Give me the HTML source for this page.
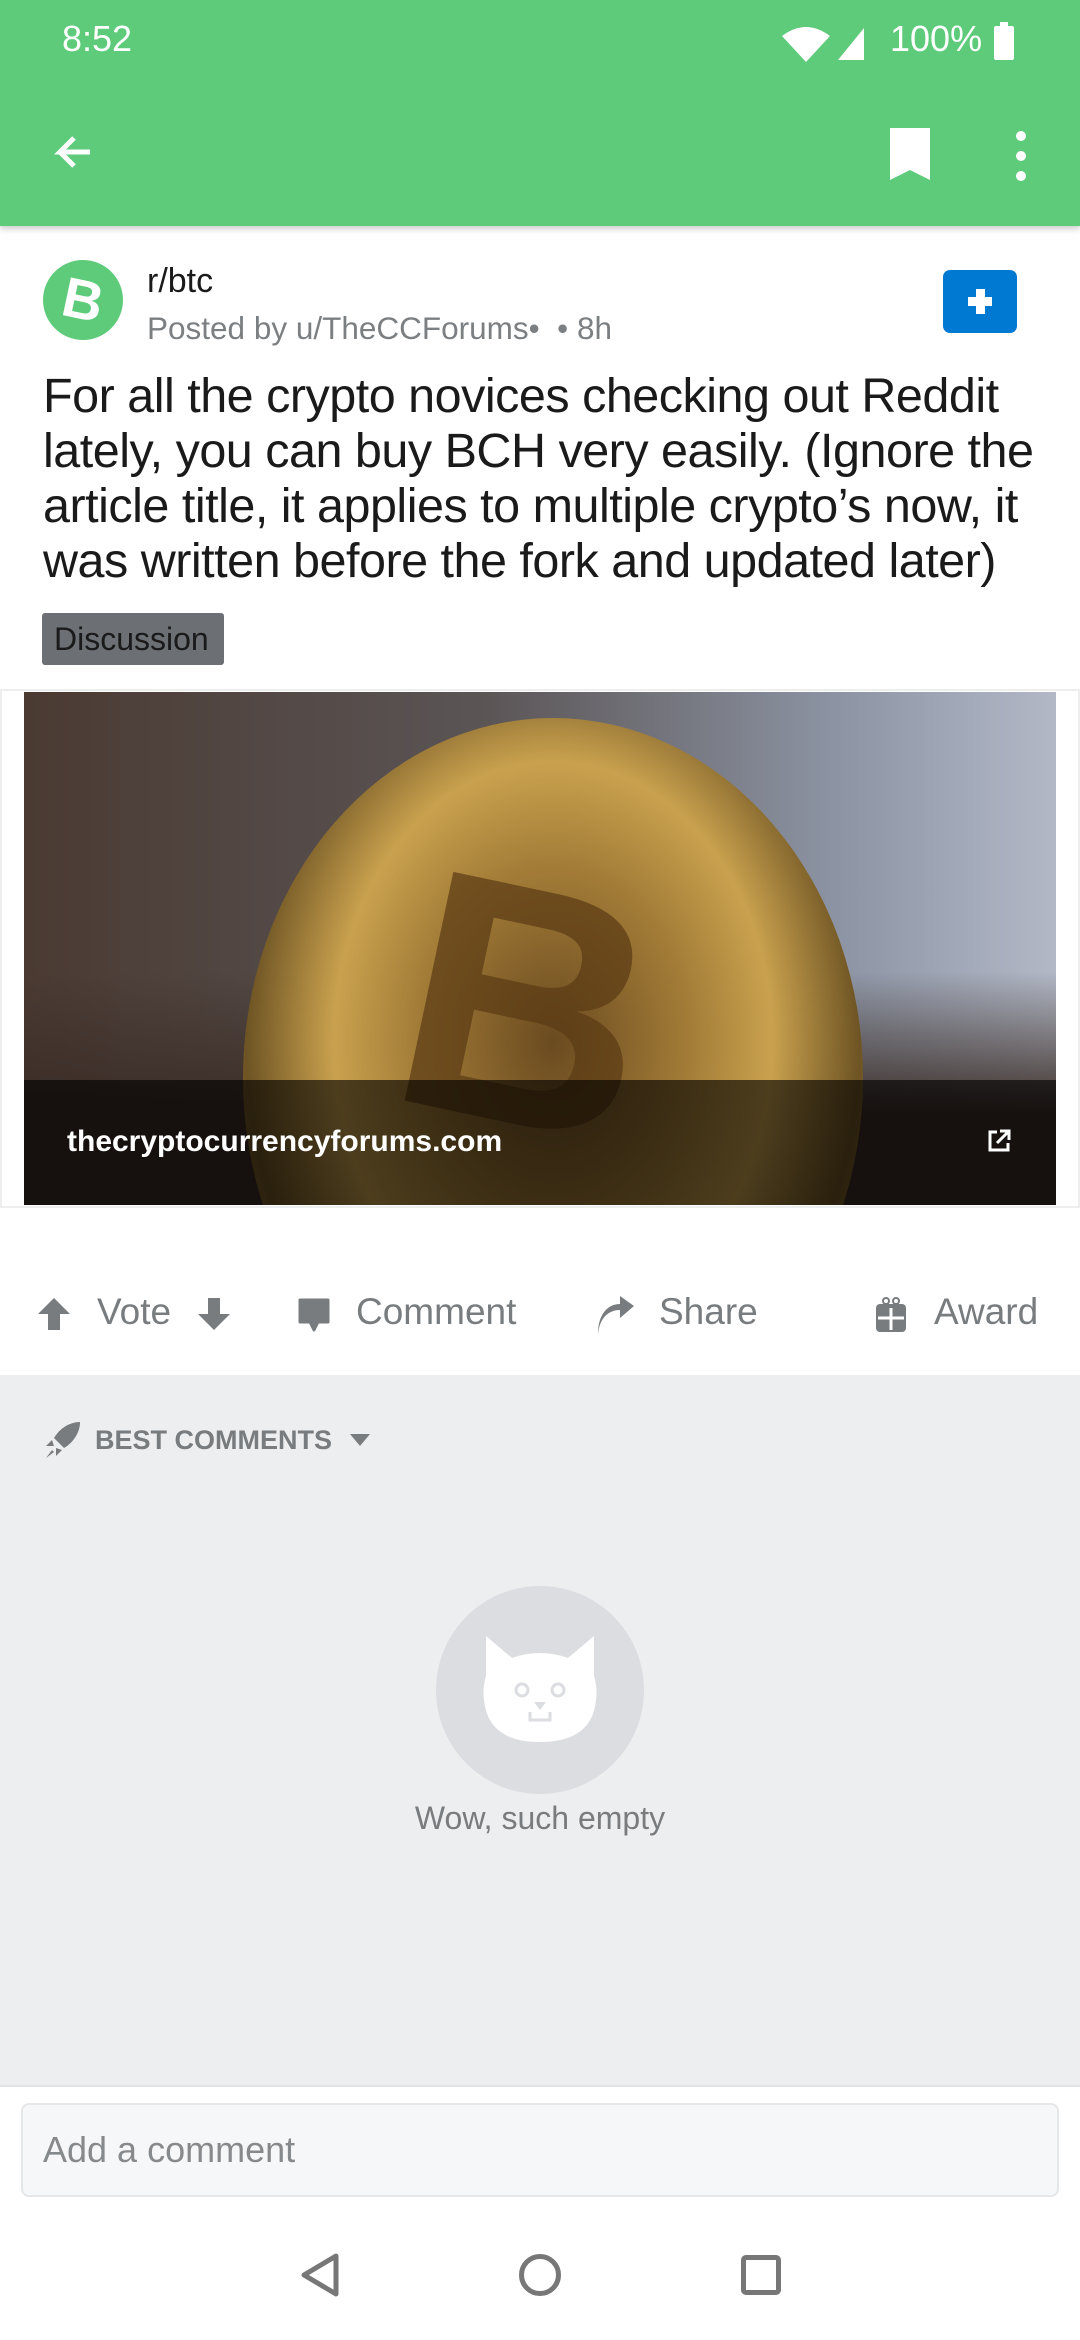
<!DOCTYPE html>
<html><head><meta charset="utf-8"><style>
*{margin:0;padding:0;box-sizing:border-box}
body{width:1080px;height:2340px;position:relative;background:#fff;font-family:"Liberation Sans",sans-serif;overflow:hidden}
.a{position:absolute}
.t div{white-space:nowrap}
</style></head><body>
<div class="a" style="left:0;top:0;width:1080px;height:226px;background:#5ecb7a;box-shadow:0 3px 6px rgba(0,0,0,.2)"></div>
<div class="a" style="left:62px;top:18px;color:#fff;font-size:36px">8:52</div>
<svg class="a" style="left:776px;top:24px" width="60" height="40" viewBox="0 0 60 40"><path d="M6 12 Q30 -6 54 12 L30 38Z" fill="#fff"/></svg>
<svg class="a" style="left:836px;top:26px" width="30" height="36"><path d="M2 34 L28 2 L28 34Z" fill="#fff"/></svg>
<div class="a" style="left:890px;top:18px;color:#fff;font-size:36px">100%</div>
<div class="a" style="left:994px;top:26px;width:20px;height:34px;background:#fff;border-radius:2px"></div>
<div class="a" style="left:1000px;top:22px;width:8px;height:6px;background:#fff"></div>
<svg class="a" style="left:48px;top:130px" width="48" height="48" viewBox="0 0 48 48"><path d="M42 22H12L26 8M12 22L26 36" stroke="#fff" stroke-width="5" fill="none"/></svg>
<svg class="a" style="left:886px;top:126px" width="48" height="56"><path d="M4 2H44V54L24 44L4 54Z" fill="#fff"/></svg>
<div class="a" style="left:1016px;top:131px;width:10px;height:10px;border-radius:5px;background:#fff;box-shadow:0 20px 0 #fff,0 40px 0 #fff"></div>

<div class="a" style="left:43px;top:260px;width:80px;height:80px;border-radius:40px;background:#5ecb7a;color:#fff;font-size:56px;font-weight:bold;text-align:center;line-height:80px;transform:rotate(12deg)">B</div>
<div class="a" style="left:147px;top:262px;font-size:34px;color:#1a1a1b">r/btc</div>
<div class="a" style="left:147px;top:310px;font-size:31.5px;color:#7c7f82">Posted by u/TheCCForums• &nbsp;• 8h</div>
<div class="a" style="left:943px;top:270px;width:74px;height:63px;border-radius:7px;background:#0079d3"></div>
<div class="a" style="left:968px;top:297px;width:24px;height:9px;background:#fff"></div>
<div class="a" style="left:976px;top:289px;width:9px;height:25px;background:#fff"></div>
<div class="a t" style="left:43px;top:369px;font-size:48.5px;line-height:55px;color:#1a1a1b;letter-spacing:-0.5px">
<div>For all the crypto novices checking out Reddit</div>
<div>lately, you can buy BCH very easily. (Ignore the</div>
<div>article title, it applies to multiple crypto’s now, it</div>
<div>was written before the fork and updated later)</div>
</div>
<div class="a" style="left:42px;top:613px;width:182px;height:52px;background:#6c6f73;border-radius:3px;font-size:32px;line-height:52px;color:#1a1a1b;padding-left:12px">Discussion</div>

<div class="a" style="left:0;top:689px;width:1080px;height:519px;border:2px solid #eee"></div>
<div class="a" style="left:24px;top:692px;width:1032px;height:513px;overflow:hidden;background:linear-gradient(90deg,#4a3a32 0%,#5b5556 45%,#8e96a6 80%,#b2b8c6 100%)">
 <div class="a" style="left:0;top:280px;width:1032px;height:240px;background:linear-gradient(180deg,rgba(60,45,40,0) 0%,#3a2c26 60%)"></div>
 <div class="a" style="left:219px;top:26px;width:620px;height:720px;border-radius:50%;background:radial-gradient(ellipse at 50% 45%,#6a4a20 0%,#a07a36 30%,#c9a14e 50%,#6e5424 70%,#b08c40 85%,#3e2e18 100%)"></div>
 <div class="a" style="left:380px;top:120px;font-size:340px;font-weight:bold;color:#5a3a14;opacity:.7;transform:rotate(12deg)">B</div>
 <div class="a" style="left:0;top:388px;width:1032px;height:125px;background:rgba(0,0,0,.62)"></div>
 <div class="a" style="left:43px;top:433px;font-size:30px;color:#fff;font-weight:bold">thecryptocurrencyforums.com</div>
 <svg class="a" style="left:962px;top:436px" width="26" height="26"><path d="M11 4H4V22H22V15M14 3H23V12M23 3L11 15" stroke="#fff" stroke-width="3" fill="none"/></svg>
</div>

<svg class="a" style="left:36px;top:1296px" width="36" height="36"><path d="M18 2L34 18H24V34H12V18H2Z" fill="#787c7e"/></svg>
<div class="a" style="left:97px;top:1291px;font-size:37px;color:#787c7e">Vote</div>
<svg class="a" style="left:196px;top:1296px" width="36" height="36"><path d="M18 34L34 18H24V2H12V18H2Z" fill="#787c7e"/></svg>
<svg class="a" style="left:296px;top:1298px" width="36" height="36"><path d="M4 2H32V24H22L18 32L14 24H4Z" fill="#787c7e" stroke="#787c7e" stroke-linejoin="round" stroke-width="3"/></svg>
<div class="a" style="left:356px;top:1291px;font-size:37px;color:#787c7e">Comment</div>
<svg class="a" style="left:596px;top:1296px" width="40" height="40"><path d="M2 38C4 20 14 14 24 14V22L38 10L24 0V8C12 8 2 18 2 38Z" fill="#787c7e"/></svg>
<div class="a" style="left:659px;top:1291px;font-size:37px;color:#787c7e">Share</div>
<svg class="a" style="left:874px;top:1296px" width="34" height="38"><rect x="2" y="8" width="30" height="28" rx="4" fill="#787c7e"/><path d="M17 12V34M4 22H30" stroke="#fff" stroke-width="3"/><circle cx="12" cy="5" r="3" fill="none" stroke="#787c7e" stroke-width="2"/><circle cx="22" cy="5" r="3" fill="none" stroke="#787c7e" stroke-width="2"/></svg>
<div class="a" style="left:934px;top:1291px;font-size:37px;color:#787c7e">Award</div>

<div class="a" style="left:0;top:1375px;width:1080px;height:710px;background:#edeef0"></div>
<svg class="a" style="left:42px;top:1420px" width="40" height="40"><path d="M38 2C28 2 18 8 12 18L22 28C32 22 38 12 38 2Z" fill="#787c7e"/><path d="M10 20L4 26L12 26ZM20 30L14 36L14 28Z" fill="#787c7e"/><path d="M10 30L4 38L12 32Z" fill="#787c7e"/></svg>
<div class="a" style="left:95px;top:1425px;font-size:27px;font-weight:bold;color:#787c7e">BEST COMMENTS</div>
<svg class="a" style="left:348px;top:1432px" width="24" height="16"><path d="M2 2H22L12 14Z" fill="#787c7e"/></svg>
<div class="a" style="left:436px;top:1586px;width:208px;height:208px;border-radius:50%;background:#dcdde0"></div>
<svg class="a" style="left:482px;top:1630px" width="116" height="120" viewBox="0 0 116 120"><path d="M4 6L30 28Q58 18 86 28L112 6V46Q116 60 114 70Q110 112 58 112Q6 112 2 70Q0 60 4 46Z" fill="#fff"/><circle cx="40" cy="60" r="6" fill="none" stroke="#dcdde0" stroke-width="3"/><circle cx="76" cy="60" r="6" fill="none" stroke="#dcdde0" stroke-width="3"/><path d="M52 72H64L58 80Z" fill="#dcdde0"/><path d="M48 82V90H68V82" stroke="#dcdde0" stroke-width="3" fill="none"/></svg>
<div class="a" style="left:0;top:1800px;width:1080px;text-align:center;font-size:32px;color:#787c7e">Wow, such empty</div>

<div class="a" style="left:0;top:2085px;width:1080px;height:2px;background:#e2e3e5"></div>
<div class="a" style="left:21px;top:2103px;width:1038px;height:94px;border:2px solid #e6e7e9;border-radius:8px;background:#f6f7f8;font-size:36px;color:#878a8c;line-height:90px;padding-left:20px">Add a comment</div>
<svg class="a" style="left:298px;top:2252px" width="44" height="46"><path d="M38 4V42L6 23Z" fill="none" stroke="#777" stroke-width="5" stroke-linejoin="round"/></svg>
<div class="a" style="left:519px;top:2254px;width:42px;height:42px;border:5px solid #777;border-radius:50%"></div>
<div class="a" style="left:741px;top:2255px;width:40px;height:40px;border:5px solid #777;border-radius:5px"></div>
</body></html>
